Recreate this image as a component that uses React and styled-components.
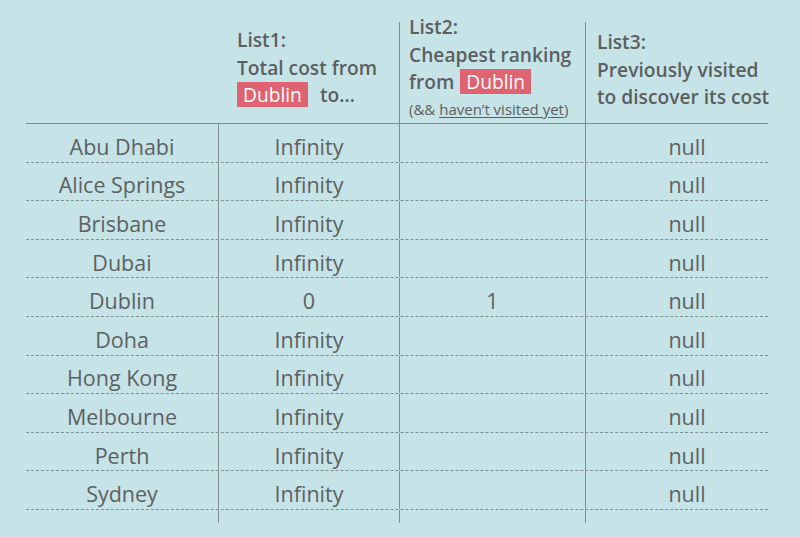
import React from 'react'
import styled, { createGlobalStyle } from 'styled-components'

const GlobalStyle = createGlobalStyle`
html, body {
  margin: 0;
  padding: 0;
  background: #c6e3e7;
}
body {
  font-family: "Open Sans", Lato, sans-serif;
  color: #5d6162;
}
`

const cities = [
  ['Abu Dhabi', 'Infinity', '', 'null'],
  ['Alice Springs', 'Infinity', '', 'null'],
  ['Brisbane', 'Infinity', '', 'null'],
  ['Dubai', 'Infinity', '', 'null'],
  ['Dublin', '0', '1', 'null'],
  ['Doha', 'Infinity', '', 'null'],
  ['Hong Kong', 'Infinity', '', 'null'],
  ['Melbourne', 'Infinity', '', 'null'],
  ['Perth', 'Infinity', '', 'null'],
  ['Sydney', 'Infinity', '', 'null'],
]

const App = () => {
  return (
    <>
      <GlobalStyle />
      <Page>
        <Table>
          <HeadRow>
            <HeadCell />
            <HeadCell $top={26} $pad={19}>
              <HeadLine>List1:</HeadLine>
              <HeadLine>Total cost from</HeadLine>
              <HeadLine>
                <Badge>Dublin</Badge>
                <Gap $w={12} />to…
              </HeadLine>
            </HeadCell>
            <HeadCell $top={13} $pad={10} $line>
              <HeadLine>List2:</HeadLine>
              <HeadLine>Cheapest ranking</HeadLine>
              <HeadLine>
                from<Gap $w={6} /><Badge>Dublin</Badge>
              </HeadLine>
              <Note>
                (&amp;&amp; <u>haven’t visited yet</u>)
              </Note>
            </HeadCell>
            <HeadCell $top={28} $pad={12} $line>
              <HeadLine>List3:</HeadLine>
              <HeadLine>Previously visited</HeadLine>
              <HeadLine>to discover its cost</HeadLine>
            </HeadCell>
          </HeadRow>
          {cities.map((row) => (
            <Row key={row[0]}>
              <Cell>{row[0]}</Cell>
              <Cell $line>{row[1]}</Cell>
              <Cell $line>{row[2]}</Cell>
              <Cell $line $shift={20}>{row[3]}</Cell>
            </Row>
          ))}
          <Tail>
            <TailCell />
            <TailCell $line />
            <TailCell $line />
            <TailCell $line />
          </Tail>
        </Table>
      </Page>
    </>
  )
}

const Page = styled.div`
width: 800px;
height: 537px;
box-sizing: border-box;
padding-left: 26px;
`
const Table = styled.div`
width: 742px;
display: flex;
flex-direction: column;
`
const cols = `192px 181px 186px 183px`

const HeadRow = styled.div`
display: grid;
grid-template-columns: ${cols};
height: 123px;
border-bottom: 1.5px solid #7f8e90;
`
const HeadCell = styled.div`
position: relative;
padding-top: ${(p) => p.$top || 0}px;
padding-left: ${(p) => p.$pad || 0}px;
font-weight: 600;
font-size: 19.2px;
color: #5b5f60;
&::before {
  content: "";
  display: ${(p) => (p.$line ? 'block' : 'none')};
  position: absolute;
  left: 0;
  top: 22px;
  bottom: 0;
  border-left: 1px solid #7f8e90;
}
`
const HeadLine = styled.div`
height: 27.5px;
line-height: 27.5px;
display: flex;
align-items: center;
white-space: nowrap;
`
const Badge = styled.span`
display: inline-block;
background: #e06371;
color: #fff;
font-weight: 400;
padding: 0 6px;
height: 25px;
line-height: 25px;
`
const Gap = styled.span`
display: inline-block;
width: ${(p) => p.$w}px;
`
const Note = styled.div`
font-size: 15px;
font-weight: 400;
margin-top: 3px;
white-space: nowrap;
u {
  text-underline-offset: 2px;
}
`
const Row = styled.div`
display: grid;
grid-template-columns: ${cols};
height: 38.6px;
border-bottom: 1px dashed #7f8e90;
box-sizing: border-box;
`
const Cell = styled.div`
display: flex;
align-items: center;
justify-content: center;
padding-left: ${(p) => p.$shift || 0}px;
padding-top: 7px;
font-size: 21.5px;
border-left: ${(p) => (p.$line ? '1px solid #7f8e90' : 'none')};
`
const Tail = styled.div`
display: grid;
grid-template-columns: ${cols};
height: 13px;
`
const TailCell = styled.div`
border-left: ${(p) => (p.$line ? '1px solid #7f8e90' : 'none')};
`

export default App
